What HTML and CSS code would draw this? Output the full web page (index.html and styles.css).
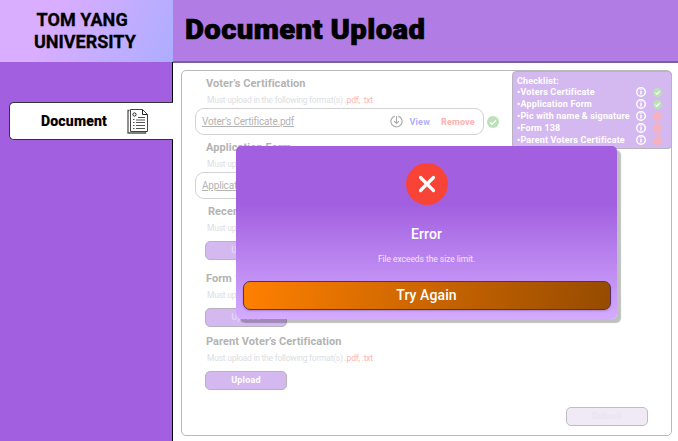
FILE: index.html
```html
<!DOCTYPE html>
<html lang="en">
<head>
<meta charset="utf-8">
<title>Document Upload</title>
<link rel="stylesheet" href="styles.css">
</head>
<body>
<svg class="defs" width="0" height="0" aria-hidden="true">
  <symbol id="info" viewBox="0 0 10 10"><circle cx="5" cy="5" r="4.3" fill="none" stroke="#fff" stroke-width="1.4"/><path d="M5 2.300v1M5 4.100v3.500" stroke="#fff" stroke-width="1.5"/></symbol>
  <symbol id="ok" viewBox="0 0 12 12"><circle cx="6" cy="6" r="6" fill="#bce0b8"/><path d="M3.2 6.2l2 2 3.8-4" fill="none" stroke="#fff" stroke-width="1.4"/></symbol>
  <symbol id="bad" viewBox="0 0 12 12"><circle cx="6" cy="6" r="6" fill="#f9b0b8"/><path d="M4 4l4 4M8 4l-4 4" stroke="#e3b3df" stroke-width="1.5"/></symbol>
</svg>
<div class="app">
  <aside class="sidebar">
    <div class="brand"><span class="b1">TOM YANG</span><span class="b2">UNIVERSITY</span></div>
    <nav class="nav">
      <a class="tab"><span class="tab-label">Document</span>
        <svg class="doc" viewBox="0 0 22 26" fill="none" stroke="#222" stroke-width="1">
          <path d="M2.500 2.500H1v22.500h17.500V23.500" stroke="#555" stroke-width="1.300"/>
          <path d="M3.500 1.500v22h17V6.500l-5-5z" fill="#fff" stroke="#444"/>
          <path d="M15.500 1.500v5h5"/>
          <circle cx="7.500" cy="6.500" r="1.600"/>
          <path d="M11 9.500h7M6 11.500h1.500M9 12h9M6 14.500h1.500M9 14.500h9M6 17.500h1.500M9 17.500h9M6 20.500h1.500M9 20.500h9" stroke="#555"/>
        </svg>
      </a>
    </nav>
  </aside>
  <main class="main">
    <header class="header"><h1>Document Upload</h1></header>
    <section class="panel">
      <div class="item file">
        <h2>Voter’s Certification</h2>
        <p>Must upload in the following format(s) <em>.pdf, .txt</em></p>
        <div class="row"><div class="filebox"><u class="f1">Voter’s Certificate.pdf</u>
          <svg class="down" viewBox="0 0 14 14" fill="none" stroke="#aaa" stroke-width="1.200"><path d="M5 1.200a6 6 0 1 0 4 0M7 1v8M4.500 6.700L7 9.200l2.500-2.500"/></svg>
          <span class="view">View</span><span class="remove">Remove</span></div>
          <svg class="ok" viewBox="0 0 12 12"><use href="#ok"/></svg></div>
      </div>
      <div class="item file second">
        <h2>Application Form</h2>
        <p>Must upload in the following format(s)</p>
        <div class="row"><div class="filebox"><u>Application Form.pdf</u></div></div>
      </div>
      <div class="item recent">
        <h2>Recent Picture</h2>
        <p>Must upload in the following format(s)</p>
        <button class="faint">Upload</button>
      </div>
      <div class="item form">
        <h2>Form 138</h2>
        <p>Must upload in the following format(s)</p>
        <button class="faint">Upload</button>
      </div>
      <div class="item parent">
        <h2>Parent Voter’s Certification</h2>
        <p>Must upload in the following format(s) <em>.pdf, .txt</em></p>
        <button>Upload</button>
      </div>
      <button class="submit">Submit</button>
      <aside class="checklist">
        <div class="c0">Checklist:</div>
        <div class="check"><span>•Voters Certificate</span><svg><use href="#info"/></svg><svg class="st"><use href="#ok"/></svg></div>
        <div class="check"><span>•Application Form</span><svg><use href="#info"/></svg><svg class="st"><use href="#ok"/></svg></div>
        <div class="check"><span>•Pic with name &amp; signature</span><svg><use href="#info"/></svg><svg class="st"><use href="#bad"/></svg></div>
        <div class="check"><span>•Form 138</span><svg><use href="#info"/></svg><svg class="st"><use href="#bad"/></svg></div>
        <div class="check"><span>•Parent Voters Certificate</span><svg><use href="#info"/></svg><svg class="st"><use href="#bad"/></svg></div>
      </aside>
    </section>
  </main>
</div>
<div class="modal" role="dialog">
  <svg class="cross" viewBox="0 0 42 42"><circle cx="21" cy="21" r="21" fill="#f84437"/><path d="M14.500 14.500l13 13M27.500 14.500l-13 13" stroke="#fff" stroke-width="3.200" stroke-linecap="round"/></svg>
  <div class="title">Error</div>
  <div class="msg">File exceeds the size limit.</div>
  <button class="again">Try Again</button>
</div>
</body>
</html>
```
FILE: styles.css
```css
* { box-sizing: border-box; }
body { margin: 0; font-family: Roboto, "Liberation Sans", sans-serif; background: #fff; overflow: hidden; }
.defs { position: absolute; }
h1, h2, p { margin: 0; white-space: nowrap; }
.app { display: flex; width: 678px; height: 441px; }
.sidebar { width: 173px; display: flex; flex-direction: column; }
.brand { height: 62px; padding-top: 9px; background: linear-gradient(115deg, #d9adff 30%, #adadff); display: flex; flex-direction: column; font-size: 18px; line-height: 21.500px; font-weight: 700; color: #000; }
.b1 { margin-left: 36.500px; letter-spacing: .08px; }
.b2 { margin-left: 34px; }
.brand span { -webkit-text-stroke: .3px #000; }
.nav { flex: 1; background: linear-gradient(#000, #000) right / 1px 100% no-repeat #a260e0; padding: 39.500px 0 0 8.500px; }
.tab { height: 38px; display: flex; align-items: center; background: #fff; border: 1px solid #333; border-right: 0; border-radius: 5px 0 0 5px; }
.tab-label { margin-left: 31.500px; width: 85.500px; font-size: 14px; font-weight: 800; letter-spacing: .2px; -webkit-text-stroke: .2px #000; }
.doc { width: 22px; height: 26px; }
.main { flex: 1; display: flex; flex-direction: column; }
.header { height: 63px; background: #b17de5; border-bottom: 2px solid #79619a; }
h1 { margin-left: 12px; font-size: 28px; line-height: 60px; font-weight: 900; letter-spacing: .35px; -webkit-text-stroke: .7px #000; transform: scaleX(1.046); transform-origin: left; }
.panel { position: relative; margin: 7px 6px 5px 8px; flex: 1; border: 1px solid #b9b9b9; border-radius: 5px; display: flex; flex-direction: column; }
.item { padding-left: 24px; height: 66px; }
.file { height: 63.500px; padding-top: 6px; }
.second { padding-top: 6px; height: 64px; }
h2 { font-size: 11px; line-height: 14px; font-weight: 700; color: #b3b3b3; letter-spacing: .06px; }
p { font-size: 8.500px; line-height: 10px; margin: 4px 0 0 1px; color: #dcdee2; font-weight: 400; letter-spacing: -.24px; }
em { font-style: normal; color: #ffb3b3; }
.row { display: flex; align-items: center; margin: 3px 0 0 -11.500px; }
.filebox { width: 289.500px; height: 27px; border: 1px solid #d3d3d3; border-radius: 9px; display: flex; align-items: center; padding-left: 6.500px; }
u { font-size: 10px; color: #b3b3b3; text-underline-offset: 1px; letter-spacing: -.2px; }
.f1 { width: 188px; }
.down { width: 13px; height: 13px; margin-right: 6.500px; }
.view, .remove { font-size: 9px; font-weight: 700; color: #b0b0ff; width: 31.500px; letter-spacing: .17px; }
.remove { color: #ffb0b0; }
.ok { width: 12px; height: 12px; margin-left: 3px; }
.recent { padding-top: 6px; height: 67px; }
.form { padding-top: 6px; height: 63px; }
.parent { padding-top: 6px; }
.recent h2 { margin-left: 2px; }
button { display: block; font: 700 9px/17px Roboto, sans-serif; letter-spacing: .2px; width: 82px; height: 19px; padding: 0; border: 1px solid #b9b2be; border-radius: 5px; background: #d4b8f0; color: #fff; margin: 8px 0 0 -1px; }
.faint { color: #e5d3f6; }
.submit { position: absolute; left: 384px; top: 336px; margin: 0; background: #f0eaf6; border-color: #c0bcc4; color: #ebe4f1; }
.checklist { position: absolute; left: 330px; top: 0; width: 160px; height: 78px; padding: 3px 0 0 4px; background: #d4b8f0; border: 1px solid #b9b3bf; border-radius: 4px; color: #fff; font-size: 9px; letter-spacing: .16px; line-height: 12px; font-weight: 700; white-space: nowrap; }
.c0 { height: 11px; }
.check { display: flex; align-items: center; height: 12px; }
.check span { width: 118.500px; }
.check svg { width: 10px; height: 10px; }
.check .st { width: 9px; height: 9px; margin-left: 7px; }
.modal { position: absolute; left: 236px; top: 145.500px; width: 381px; height: 173px; padding: 17.500px 6.500px 0; border-radius: 5px; background: linear-gradient(#a260e0 34%, #d4abff); box-shadow: 4px 4px 1px rgba(0,0,0,.25); color: #fff; display: flex; flex-direction: column; align-items: center; }
.cross { width: 42px; height: 42px; flex: none; }
.title { margin-top: 20px; font-size: 14px; line-height: 18px; font-weight: 500; letter-spacing: .1px; }
.msg { margin-top: 10px; font-size: 8.500px; line-height: 12px; color: #f1e4fd; letter-spacing: -.06px; }
.again { width: 368px; height: 29px; margin: 15.500px 0 0; flex: none; border: 1px solid #50325c; border-radius: 7px; background: linear-gradient(100deg, #ff8000, #964b00); font-size: 14px; font-weight: 500; letter-spacing: .1px; line-height: 27px; box-shadow: 0 1px 2px rgba(0,0,0,.2); }
```
